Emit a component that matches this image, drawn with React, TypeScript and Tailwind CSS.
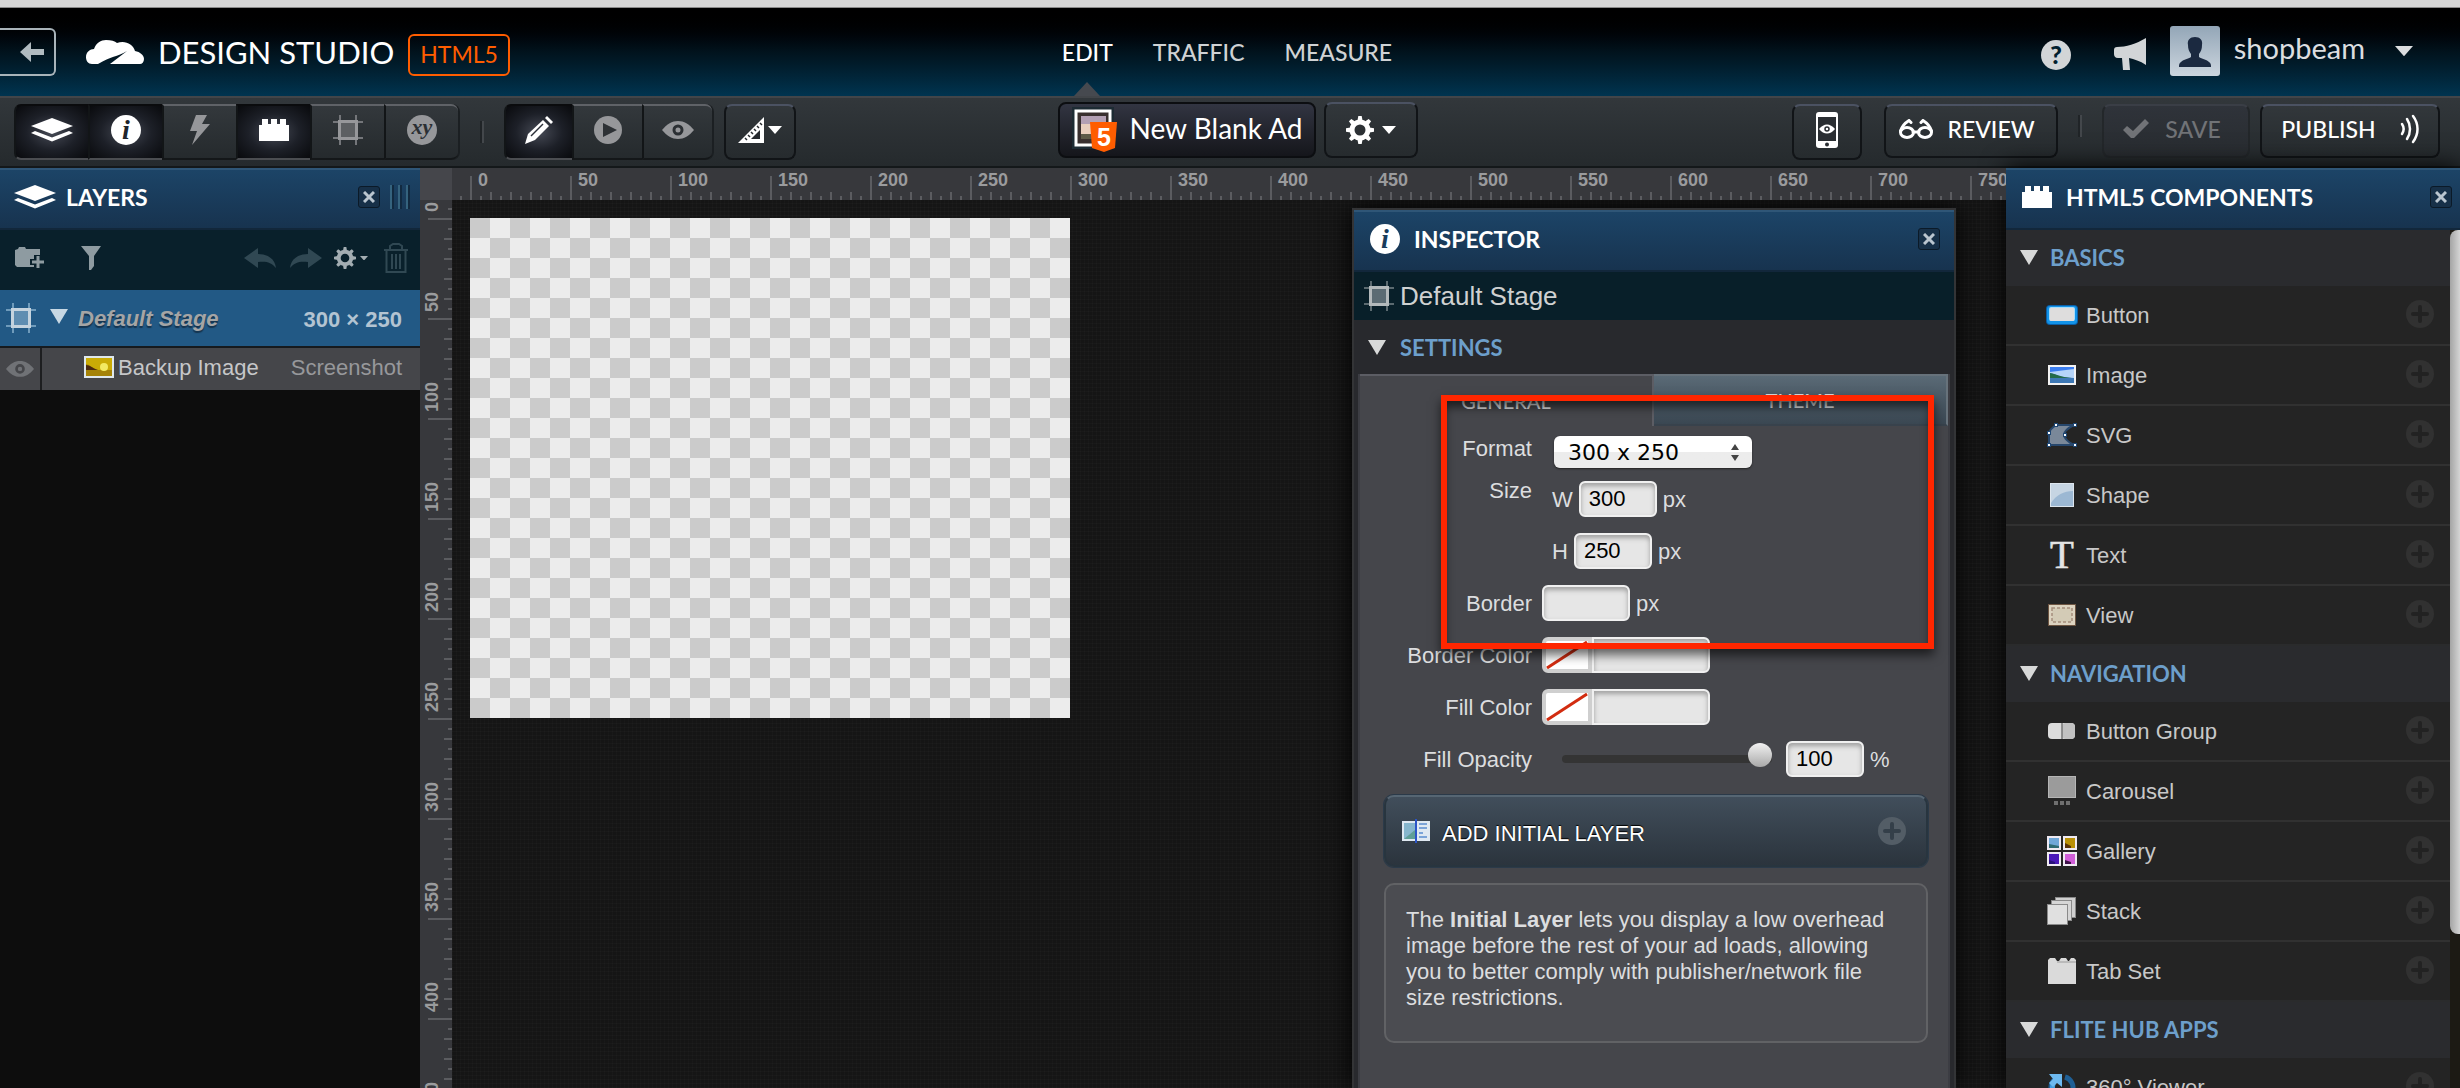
import React, { useEffect, useState } from 'react';
import type { ReactNode } from 'react';

/* ---------- icons ---------- */

function LayersIcon() {
  return (
    <svg width="42" height="24" viewBox="0 0 42 24" fill="#fff" aria-hidden="true">
      <path d="M0 8 21 0l21 8-21 8z" />
      <path d="M0 15l4-2 17 6.500 17-6.500 4 2-21 8.500z" />
    </svg>
  );
}

function InfoIcon({ ink }: { ink: string }) {
  return (
    <svg width="30" height="30" viewBox="0 0 30 30" aria-hidden="true">
      <circle cx="15" cy="15" r="15" fill="#fff" />
      <text x="15" y="24" textAnchor="middle" fontFamily="Liberation Serif, serif" fontStyle="italic" fontWeight="700" fontSize="28" fill={ink}>
        i
      </text>
    </svg>
  );
}

function BoltIcon() {
  return (
    <svg width="20" height="30" viewBox="0 0 20 30" fill="#96979a" aria-hidden="true">
      <path d="M6 0h11l-5 9h8L2 30l5-14H0z" />
    </svg>
  );
}

function BrickIcon() {
  return (
    <svg width="30" height="22" viewBox="0 0 30 22" fill="#fff" aria-hidden="true">
      <path d="M0 6h3V0h6v5h3V0h6v5h3V0h6v6h3v16H0z" />
    </svg>
  );
}

function StageIcon({ line, frame, fill }: { line: string; frame: string; fill: string }) {
  return (
    <svg width="30" height="30" viewBox="0 0 30 30" className="shrink-0" aria-hidden="true">
      <path d="M7 0v30M23 0v30M0 7h30M0 23h30" stroke={line} strokeWidth="2" />
      <rect x="6.500" y="6.500" width="17" height="17" fill={fill} stroke={frame} strokeWidth="3" />
    </svg>
  );
}

function XyIcon() {
  return (
    <svg width="30" height="30" viewBox="0 0 30 30" aria-hidden="true">
      <circle cx="15" cy="15" r="15" fill="#96979a" />
      <text x="15" y="19" textAnchor="middle" fontFamily="Liberation Serif, serif" fontStyle="italic" fontWeight="700" fontSize="22" fill="#2b2f33">
        xy
      </text>
    </svg>
  );
}

function PencilIcon() {
  return (
    <svg width="28" height="28" viewBox="0 0 28 28" aria-hidden="true">
      <path d="M0 28l3-10L18 4l6 6L10 24z" fill="#fff" />
      <path d="M20 2l2-2 6 6-2 2z" fill="#fff" />
      <path d="M6 20L18 8" stroke="#2b2f38" strokeWidth="1.500" />
    </svg>
  );
}

function PlayIcon() {
  return (
    <svg width="28" height="28" viewBox="0 0 28 28" aria-hidden="true">
      <circle cx="14" cy="14" r="14" fill="#96979a" />
      <path d="M9 7l14 7-14 7z" fill="#2d3135" />
    </svg>
  );
}

function EyeIcon({ color, hole, width }: { color: string; hole: string; width: number }) {
  return (
    <svg width={width} height={(width * 9) / 16} viewBox="0 0 32 18" aria-hidden="true">
      <path d="M0 9C5 3 10 0 16 0s11 3 16 9c-5 6-10 9-16 9S5 15 0 9z" fill={color} />
      <circle cx="16" cy="9" r="4" fill={color} stroke={hole} strokeWidth="3" />
    </svg>
  );
}

function RulerIcon() {
  return (
    <svg width="26" height="26" viewBox="0 0 26 26" aria-hidden="true">
      <path d="M0 26L26 0v26z" fill="#fff" />
      <path d="M13 22l9-9v9z" fill="#262a2e" />
      <path d="M7 21l2 2M10 18l2 2M13 15l2 2M16 12l2 2M19 9l2 2M22 6l2 2" stroke="#262a2e" strokeWidth="1.500" />
    </svg>
  );
}

function Caret({ width, color = '#fff' }: { width: number; color?: string }) {
  return (
    <svg width={width} height={(width * 8) / 14} viewBox="0 0 14 8" fill={color} aria-hidden="true">
      <path d="M0 0h14L7 8z" />
    </svg>
  );
}

function Triangle({ color = '#d8d9d9' }: { color?: string }) {
  return (
    <svg width="18" height="15" viewBox="0 0 18 15" fill={color} className="shrink-0" aria-hidden="true">
      <path d="M0 0h18L9 15z" />
    </svg>
  );
}

const teeth = [0, 45, 90, 135, 180, 225, 270, 315];

function GearIcon({ size, color }: { size: number; color: string }) {
  return (
    <svg width={size} height={size} viewBox="0 0 28 28" aria-hidden="true">
      <circle cx="14" cy="14" r="8" fill="none" stroke={color} strokeWidth="5" />
      {teeth.map((angle) => (
        <path key={angle} d="M11.500 4.500l.8-4.500h3.400l.8 4.500z" fill={color} transform={`rotate(${angle} 14 14)`} />
      ))}
    </svg>
  );
}

function CloudIcon() {
  return (
    <svg width="58" height="24" viewBox="0 0 58 24" fill="#fff" aria-hidden="true">
      <path d="M6 24C2 24 0 21 0 17c0-5 4-8 8-8C10 3 15 0 20 0c5 0 9 1 11 3 8-3 16 1 18 8 5 1 9 4 9 8 0 3-2 5-4 5H24l17-13C31 17 25 16 12 24z" />
    </svg>
  );
}

function BackArrow() {
  return (
    <svg width="24" height="20" viewBox="0 0 24 20" fill="#b1bbc0" aria-hidden="true">
      <path d="M0 10L11 0v7h13v6H11v7z" />
    </svg>
  );
}

function HelpIcon() {
  return (
    <svg width="30" height="30" viewBox="0 0 30 30" aria-hidden="true">
      <circle cx="15" cy="15" r="15" fill="#d2d5d7" />
      <text x="15" y="24" textAnchor="middle" fontFamily="Lato, sans-serif" fontWeight="900" fontSize="25" fill="#02202e">
        ?
      </text>
    </svg>
  );
}

function MegaphoneIcon() {
  return (
    <svg width="32" height="32" viewBox="0 0 32 32" fill="#d2d5d7" aria-hidden="true">
      <path d="M3 9C12 9 22 6 32 0v27C26 23 20 21 15 20l1 12H9L8 20H4c-3 0-4-2-4-4v-4c0-2 1-3 3-3z" />
    </svg>
  );
}

function Avatar() {
  return (
    <svg width="50" height="50" viewBox="0 0 50 50" aria-hidden="true">
      <defs>
        <linearGradient id="avatar" x2="0" y2="1">
          <stop stopColor="#93a6b7" />
          <stop offset="1" stopColor="#ccd5de" />
        </linearGradient>
      </defs>
      <rect width="50" height="50" rx="3" fill="url(#avatar)" />
      <path d="M25 11c5 0 8 3 7 8 0 4-1 6-3 9v3c3 2 7 2 10 5 2 1 2 3 2 5H9c0-2 0-4 2-5 3-3 7-3 10-5v-3c-2-3-3-5-3-9-1-5 2-8 7-8z" fill="#1b2940" />
    </svg>
  );
}

function AdIcon() {
  return (
    <svg width="46" height="46" viewBox="0 0 46 46" aria-hidden="true">
      <rect width="42" height="42" fill="#1d2b33" />
      <rect x="4" y="4" width="34" height="34" fill="#39302f" stroke="#fff" strokeWidth="3" />
      <rect x="9" y="9" width="25" height="8" fill="#b3a0b4" />
      <rect x="9" y="17" width="25" height="10" fill="#e9cfbe" />
      <path d="M9 27h25v5H9z" fill="#5d5a48" />
      <path d="M18 15h27l-2 26-11 4-12-4z" fill="#ff5d00" />
      <text x="32" y="39" textAnchor="middle" fontFamily="Liberation Sans, sans-serif" fontWeight="700" fontSize="25" fill="#fff">
        5
      </text>
    </svg>
  );
}

function PhoneIcon() {
  return (
    <svg width="22" height="36" viewBox="0 0 22 36" aria-hidden="true">
      <rect width="22" height="36" rx="3" fill="#fff" />
      <rect x="2" y="5" width="18" height="24" fill="#2a2e32" />
      <circle cx="11" cy="32.500" r="2" fill="#2a2e32" />
      <path d="M3 17c5-6 11-6 16 0-5 6-11 6-16 0z" fill="#fff" />
      <circle cx="11" cy="17" r="2" fill="#fff" stroke="#2a2e32" strokeWidth="1.500" />
    </svg>
  );
}

function GlassesIcon() {
  return (
    <svg width="34" height="20" viewBox="0 0 34 20" fill="none" stroke="#fff" strokeWidth="3" strokeLinecap="round" aria-hidden="true">
      <ellipse cx="8" cy="13.500" rx="6.500" ry="5" />
      <ellipse cx="26" cy="13.500" rx="6.500" ry="5" />
      <path d="M14 13h6M1.500 12C3 7 6 4 10 1.500l2 2M32.500 12C31 7 28 4 24 1.500l-2 2" />
    </svg>
  );
}

function CheckIcon() {
  return (
    <svg width="26" height="20" viewBox="0 0 26 20" fill="#717377" aria-hidden="true">
      <path d="M0 11l4-4 6 5L22 0l4 4-15 15H8z" />
    </svg>
  );
}

function WavesIcon() {
  return (
    <svg width="19" height="30" viewBox="0 0 19 30" fill="none" stroke="#fff" strokeWidth="2.500" strokeLinecap="round" aria-hidden="true">
      <path d="M2 10c2 3 2 7 0 10M7 5c4 6 4 14 0 20M13 2c6 8 6 18 0 26" />
    </svg>
  );
}

function FolderPlusIcon() {
  return (
    <svg width="30" height="22" viewBox="0 0 30 22" aria-hidden="true">
      <path d="M0 3l3-1 1-2h6l1 2h14v6h-6v4h-4v6h4v2H2l-2-2z" fill="#8e9ba1" />
      <path d="M23 9v12M17 15h12" stroke="#8e9ba1" strokeWidth="3" />
    </svg>
  );
}

function FunnelIcon() {
  return (
    <svg width="20" height="24" viewBox="0 0 20 24" fill="#8e9ba1" aria-hidden="true">
      <path d="M0 0h20l-7 10v10l-3 4H8V10z" />
    </svg>
  );
}

function UndoIcon({ flip = false }: { flip?: boolean }) {
  return (
    <svg width="32" height="20" viewBox="0 0 32 20" fill="#304853" aria-hidden="true">
      <path d={flip ? 'M32 10L18 0v6C8 6 1 11 0 20c5-6 10-7 18-6v6z' : 'M0 10L14 0v6c10 0 17 5 18 14-5-6-10-7-18-6v6z'} />
    </svg>
  );
}

function TrashIcon() {
  return (
    <svg width="24" height="30" viewBox="0 0 24 30" fill="none" stroke="#304853" strokeWidth="2" aria-hidden="true">
      <path d="M0 7h24M2.500 8v21h19V8M6 6V3l3-2h6l3 2v3M8 11v15M12 11v15M16 11v15" />
    </svg>
  );
}

function PlusBadge({ disc, cross }: { disc: string; cross: string }) {
  return (
    <svg width="28" height="28" viewBox="0 0 28 28" aria-hidden="true">
      <circle cx="14" cy="14" r="14" fill={disc} />
      <path d="M14 7v14M7 14h14" stroke={cross} strokeWidth="4" strokeLinecap="round" />
    </svg>
  );
}

function SunsetIcon() {
  return (
    <svg width="30" height="22" viewBox="0 0 30 22" aria-hidden="true">
      <rect x="1" y="1" width="28" height="20" fill="#c9ab06" stroke="#dfe8ec" strokeWidth="2" />
      <path d="M2 8c4 1 6 4 12 6h14v6H2z" fill="#a58308" />
      <path d="M2 9c4 0 6 3 12 5H2z" fill="#4a2a10" />
      <circle cx="20" cy="11" r="4" fill="#f3ea62" />
    </svg>
  );
}

function InitialLayerIcon() {
  return (
    <svg width="28" height="24" viewBox="0 0 28 24" aria-hidden="true">
      <rect y="2" width="28" height="20" fill="#dfe9f2" />
      <rect x="2" y="4" width="11" height="16" fill="#86b6cd" />
      <path d="M2 20l11-9v9z" fill="#5f9f97" />
      <path d="M17 5h8M17 9h8M17 14h4M17 18h8" stroke="#7ba4d8" strokeWidth="2" />
      <path d="M14 0v24" stroke="#2b55c8" strokeWidth="2" />
    </svg>
  );
}

const componentIcons: Record<string, ReactNode> = {
  Button: (
    <svg width="32" height="20" viewBox="0 0 32 20">
      <rect width="32" height="20" rx="4" fill="#0a5fa8" />
      <rect x="1" y="1" width="30" height="18" rx="3" fill="#1293e8" />
      <rect x="3" y="2" width="26" height="14" rx="2" fill="#a7dcfb" />
      <rect x="4" y="3" width="24" height="13" rx="1" fill="#dedddd" />
    </svg>
  ),
  Image: (
    <svg width="28" height="20" viewBox="0 0 28 20">
      <rect x="1" y="1" width="26" height="18" fill="#b5d4f8" stroke="#f2f2f2" strokeWidth="2" />
      <path d="M2 2h24v2L2 7z" fill="#3a7df0" />
      <path d="M2 8c6 1 10 5 24 5v5H2z" fill="#3d78b5" />
      <path d="M2 8c6 1 10 4 22 5H2z" fill="#236b4a" />
    </svg>
  ),
  SVG: (
    <svg width="32" height="26" viewBox="0 0 32 26">
      <path d="M10 3h18c-6 3-10 7-10 10s5 8 10 10H3V11c1-4 4-6 7-8z" fill="#7a8899" stroke="#27476c" strokeWidth="2" />
      <path d="M8 1h4v4H8zM27 1h4v4h-4zM1 9h4v4H1zM17 11h4v4h-4zM1 21h4v4H1zM27 21h4v4h-4z" fill="#1d4673" />
      <path d="M9 2h2v2H9zM28 2h2v2h-2zM2 10h2v2H2zM18 12h2v2h-2zM2 22h2v2H2zM28 22h2v2h-2z" fill="#fff" />
    </svg>
  ),
  Shape: (
    <svg width="24" height="24" viewBox="0 0 24 24">
      <rect x=".5" y=".5" width="23" height="23" fill="#c6d5e3" stroke="#dde6ee" />
      <path d="M1 20C6 12 14 8 23 8v15H1z" fill="#9cb8d3" />
    </svg>
  ),
  Text: (
    <svg width="28" height="28" viewBox="0 0 28 28">
      <text x="14" y="27" textAnchor="middle" fontFamily="Liberation Serif, serif" fontWeight="400" fontSize="39" fill="#e4e4e4" stroke="#e4e4e4" strokeWidth=".6">
        T
      </text>
    </svg>
  ),
  View: (
    <svg width="28" height="22" viewBox="0 0 28 22">
      <rect x=".5" y=".5" width="27" height="21" fill="#dcd3c0" stroke="#6d5542" />
      <rect x="4" y="4" width="20" height="14" fill="#d3cbb6" stroke="#a58f7c" strokeDasharray="3 2" strokeWidth="1.500" />
    </svg>
  ),
  'Button Group': (
    <svg width="28" height="18" viewBox="0 0 28 18">
      <rect y="1" width="27" height="16" rx="4" fill="#dcdcdc" />
      <rect x="14" y="1" width="13" height="16" rx="4" fill="#c2c2c2" />
      <path d="M14 1v16" stroke="#777" strokeWidth="1.500" />
    </svg>
  ),
  Carousel: (
    <svg width="28" height="30" viewBox="0 0 28 30">
      <rect x=".5" y=".5" width="27" height="21" fill="#9b9b9b" stroke="#b5b5b5" />
      <path d="M6 25h4v4H6zM12 25h4v4h-4zM18 25h4v4h-4z" fill="#6f6f6f" />
    </svg>
  ),
  Gallery: (
    <svg width="30" height="30" viewBox="0 0 30 30">
      <g stroke="#efeaf2" strokeWidth="2">
        <rect x="1" y="1" width="12" height="12" fill="#6fa7d8" />
        <rect x="17" y="1" width="12" height="12" fill="#b99007" />
        <rect x="1" y="17" width="12" height="12" fill="#4a18b8" />
        <rect x="17" y="17" width="12" height="12" fill="#d05fd8" />
      </g>
      <path d="M2 8l10 2v2H2z" fill="#2e6a72" />
      <path d="M18 7l6 3v2h-6z" fill="#5a3208" />
      <path d="M18 24l6 2v2h-6z" fill="#40104a" />
      <path d="M2 24l6 2v2H2z" fill="#28107a" />
    </svg>
  ),
  Stack: (
    <svg width="30" height="28" viewBox="0 0 30 28" stroke="#8a8a8a">
      <rect x="8.500" y=".5" width="20" height="20" fill="#d0d0d0" />
      <rect x="4.500" y="3.500" width="20" height="20" fill="#d6d6d6" />
      <rect x=".5" y="7.500" width="20" height="20" fill="#e0e0e0" />
    </svg>
  ),
  'Tab Set': (
    <svg width="28" height="28" viewBox="0 0 28 28">
      <path d="M0 3l2-2h5l2 3h2l2-3h5l2 3h1l2-3h3l2 2v24H0z" fill="#dadada" />
      <path d="M9 5h19" stroke="#9a9a9a" />
    </svg>
  ),
  '360° Viewer': (
    <svg width="28" height="28" viewBox="0 0 28 28" fill="none">
      <path d="M17 4a11 11 0 1 1-11 3" stroke="#1f5f95" strokeWidth="5" />
      <path d="M7 21A11 11 0 0 1 7 7" stroke="#3f9be0" strokeWidth="5" />
      <path d="M1 1h13v13l-5-4-4 4-4-4 4-4z" fill="#6db9f0" />
    </svg>
  ),
};

/* ---------- shared parts ---------- */

function CloseButton({ label }: { label: string }) {
  return (
    <button type="button" aria-label={label} className="flex size-[22px] shrink-0 items-center justify-center rounded-[3px] border border-[#0b1a28] bg-[#173048]">
      <svg width="12" height="12" viewBox="0 0 12 12" stroke="#bac5cf" strokeWidth="3" aria-hidden="true">
        <path d="M1 1l10 10M11 1L1 11" />
      </svg>
    </button>
  );
}

function PanelHeader({ icon, title, children, className }: { icon: ReactNode; title: string; children: ReactNode; className: string }) {
  return (
    <header className={`flex h-[62px] shrink-0 items-center border-t-2 border-b-2 border-t-[#2f5677] border-b-[#12273b] bg-linear-to-b from-[#1c4467] to-[#17334f] pb-1 ${className}`}>
      {icon}
      <h2 className="mr-auto font-['Lato',sans-serif] text-[23px] font-bold text-white">{title}</h2>
      {children}
    </header>
  );
}

function Divider() {
  return <span className="h-8 w-1 border-r-2 border-l-2 border-l-[#202427] border-r-[#43474b]" />;
}

function ToolButton({ label, active = false, className, children }: { label: string; active?: boolean; className: string; children: ReactNode }) {
  const look = active
    ? 'border-t-[#0a0b0d] border-b-[#4b4d51] bg-radial from-[#474b56] via-[#1d2028] to-[#090a0d]'
    : 'border-t-[#5f6267] border-b-[#141719] bg-linear-to-b from-[#33383c] to-[#252a2d]';
  return (
    <button type="button" aria-label={label} aria-pressed={active} className={`flex h-14 items-center justify-center border-t-2 border-b-2 border-l-2 border-l-[#121517] pb-1 first:rounded-l-[7px] last:rounded-r-[7px] ${look} ${className}`}>
      {children}
    </button>
  );
}

function BarButton({ label, className, children }: { label?: string; className: string; children: ReactNode }) {
  return (
    <button type="button" aria-label={label} className={`flex items-center justify-center rounded-lg border-2 border-[#111417] border-t-[#4b5262] bg-linear-to-b from-[#32373b] to-[#262b2e] font-['Lato',sans-serif] text-[23px] font-medium text-white ${className}`}>
      {children}
    </button>
  );
}

/* ---------- top bars ---------- */

function Header() {
  return (
    <header className="grid h-[88px] shrink-0 grid-cols-[1fr_auto_1fr] bg-linear-to-b from-black via-[#01131d] to-[#003450] font-['Lato',sans-serif]">
      <div className="flex items-start pt-5">
        <button type="button" aria-label="Back" className="flex h-12 w-14 items-center justify-end rounded-r-md border-2 border-l-0 border-[#a9b4ba] pr-2.5">
          <BackArrow />
        </button>
        <div className="flex h-12 items-center pl-[30px]">
          <CloudIcon />
          <h1 className="ml-3.5 text-[31px] leading-8 text-white">DESIGN STUDIO</h1>
        </div>
        <span className="mt-1.5 ml-3.5 flex h-[42px] items-center rounded-md border-2 border-[#ff5d00] px-2.5 pb-0.5 text-[23px] text-[#ff5d00]">HTML5</span>
      </div>
      <nav className="flex items-stretch gap-10 pr-1.5 text-[23px] font-medium">
        <a href="#edit" className="flex flex-col items-center justify-between pt-[30px] text-white">
          <span className="leading-7">EDIT</span>
          <svg width="26" height="14" viewBox="0 0 26 14" fill="#46494f" aria-hidden="true">
            <path d="M0 14L13 0l13 14z" />
          </svg>
        </a>
        <a href="#traffic" className="pt-[30px] leading-7 text-[#cfd2d4]">TRAFFIC</a>
        <a href="#measure" className="pt-[30px] leading-7 text-[#cfd2d4]">MEASURE</a>
      </nav>
      <div className="flex items-start justify-end pt-[18px] pr-[47px]">
        <button type="button" aria-label="Help" className="mt-3.5">
          <HelpIcon />
        </button>
        <button type="button" aria-label="Announcements" className="mt-3 ml-[43px]">
          <MegaphoneIcon />
        </button>
        <button type="button" className="ml-6 flex items-start">
          <Avatar />
          <span className="ml-3.5 pt-1.5 text-[29px] leading-8 text-[#dcdee0]">shopbeam</span>
          <span className="mt-5 ml-[30px]">
            <Caret width={18} color="#dcdee0" />
          </span>
        </button>
      </div>
    </header>
  );
}

function Toolbar() {
  return (
    <div className="grid h-[72px] shrink-0 grid-cols-[1fr_auto_1fr] items-start border-t-2 border-b-2 border-t-[#424549] border-b-[#14181a] bg-linear-to-b from-[#32373b] to-[#252a2d]">
      <div className="flex items-center px-3.5 pt-1.5">
        <div className="flex rounded-lg border-r-2 border-[#1b1f22]">
          <ToolButton label="Layers" active className="w-[74px]"><LayersIcon /></ToolButton>
          <ToolButton label="Inspector" active className="w-[74px]"><InfoIcon ink="#20242c" /></ToolButton>
          <ToolButton label="Events" className="w-[74px]"><BoltIcon /></ToolButton>
          <ToolButton label="Components" active className="w-[74px]"><BrickIcon /></ToolButton>
          <ToolButton label="Stage" className="w-[74px]"><StageIcon line="#74767a" frame="#96979a" fill="#5c5f62" /></ToolButton>
          <ToolButton label="Variables" className="w-[74px]"><XyIcon /></ToolButton>
        </div>
        <div className="mx-5"><Divider /></div>
        <div className="flex rounded-lg border-r-2 border-[#1b1f22]">
          <ToolButton label="Edit mode" active className="w-[68px]"><PencilIcon /></ToolButton>
          <ToolButton label="Play" className="w-[70px]"><PlayIcon /></ToolButton>
          <ToolButton label="Preview" className="w-[70px]"><EyeIcon color="#96979a" hole="#2b2f33" width={32} /></ToolButton>
        </div>
        <BarButton label="Guides" className="ml-2.5 h-14 w-[72px] gap-1 pb-1">
          <RulerIcon />
          <Caret width={14} />
        </BarButton>
      </div>
      <div className="flex gap-2 pt-1 pl-4">
        <button type="button" className="flex h-14 items-center rounded-lg border-2 border-[#0c0e11] bg-linear-to-b from-[#323542] to-[#15161b] pr-3 pl-3 font-['Lato',sans-serif] text-[28px] text-white">
          <AdIcon />
          <span className="ml-3 pb-1">New Blank Ad</span>
        </button>
        <BarButton label="Ad settings" className="h-14 w-[94px] gap-2">
          <GearIcon size={28} color="#fff" />
          <Caret width={14} />
        </BarButton>
      </div>
      <div className="flex items-start justify-end pt-1.5 pr-5">
        <BarButton label="Mobile preview" className="h-14 w-[70px] pb-1"><PhoneIcon /></BarButton>
        <BarButton className="ml-[22px] h-[54px] w-[174px] gap-3.5 pr-2 pb-1">
          <GlassesIcon />
          REVIEW
        </BarButton>
        <div className="mx-5 mt-2.5"><Divider /></div>
        <button type="button" disabled className="flex h-[54px] w-[148px] items-center justify-center gap-4 rounded-lg border-2 border-[#23272a] border-t-[#3a3e46] bg-linear-to-b from-[#2f333a] to-[#282c30] pr-2 pb-1 font-['Lato',sans-serif] text-[23px] font-medium text-[#717377]">
          <CheckIcon />
          SAVE
        </button>
        <BarButton className="ml-2.5 h-[54px] w-[180px] gap-6 pb-1">
          PUBLISH
          <WavesIcon />
        </BarButton>
      </div>
    </div>
  );
}

/* ---------- layers ---------- */

function LayersPanel() {
  return (
    <aside className="flex w-[420px] shrink-0 flex-col bg-[#0d0d0d]">
      <PanelHeader icon={<LayersIcon />} title="LAYERS" className="gap-2.5 pr-2.5 pl-3.5">
        <CloseButton label="Close layers" />
        <span className="h-6 w-5 bg-[repeating-linear-gradient(90deg,#35637e_0_2px,#122a40_2px_4px,transparent_4px_8px)]" />
      </PanelHeader>
      <div className="flex h-[60px] shrink-0 items-center bg-[#09202b] pr-3 pb-1 pl-[15px]">
        <button type="button" aria-label="New folder"><FolderPlusIcon /></button>
        <button type="button" aria-label="Filter" className="mr-auto ml-9"><FunnelIcon /></button>
        <button type="button" aria-label="Undo"><UndoIcon /></button>
        <button type="button" aria-label="Redo" className="ml-3.5"><UndoIcon flip /></button>
        <button type="button" aria-label="Layer options" className="ml-3 flex items-center gap-1">
          <GearIcon size={22} color="#a3adb2" />
          <Caret width={8} color="#a3adb2" />
        </button>
        <button type="button" aria-label="Delete" className="ml-4"><TrashIcon /></button>
      </div>
      <div className="flex h-[58px] shrink-0 items-center border-b-2 border-[#161a1e] bg-[#225985] pr-[18px] pl-1.5 font-['Liberation_Sans',sans-serif] text-[22px] font-bold">
        <StageIcon line="#6f9bbb" frame="#c5d3de" fill="#5f8db1" />
        <span className="ml-3.5 pb-1"><Triangle color="#c7d8e4" /></span>
        <span className="ml-2.5 text-[#a5a5a5] italic [text-shadow:0_2px_1px_#15344f]">Default Stage</span>
        <span className="ml-auto pt-0.5 text-[#b3c4d2]">300 × 250</span>
      </div>
      <div className="flex h-[42px] shrink-0 items-stretch bg-[#45464a] font-['Liberation_Sans',sans-serif] text-[22px]">
        <button type="button" aria-label="Toggle visibility" className="flex w-[42px] items-center justify-center border-r-2 border-[#1d1e20]">
          <EyeIcon color="#707276" hole="#45464a" width={28} />
        </button>
        <div className="flex flex-1 items-center pr-[18px] pb-1 pl-[42px]">
          <SunsetIcon />
          <span className="ml-1 text-[#c6c7c9]">Backup Image</span>
          <span className="ml-auto text-[#97989b]">Screenshot</span>
        </div>
      </div>
    </aside>
  );
}

/* ---------- canvas ---------- */

function useWindowSize() {
  const [size, setSize] = useState({ width: window.innerWidth, height: window.innerHeight });
  useEffect(() => {
    const update = () => setSize({ width: window.innerWidth, height: window.innerHeight });
    window.addEventListener('resize', update);
    return () => window.removeEventListener('resize', update);
  }, []);
  return size;
}

/* One label per 100 pixels of ruler, standing for 50 units. */
const marks = (length: number) => Array.from({ length: Math.max(1, Math.ceil(length / 100)) }, (_, i) => i * 50);

function Rulers({ children }: { children: ReactNode }) {
  const { width, height } = useWindowSize();
  return (
    <div className="grid min-w-0 flex-1 grid-cols-[32px_1fr] grid-rows-[32px_1fr]">
      <div className="bg-[#45464b]" />
      <div className="relative overflow-hidden bg-[#37383c] font-['Liberation_Sans',sans-serif] text-lg font-bold text-[#9a9b9d]">
        <svg className="absolute inset-0 size-full" aria-hidden="true">
          <defs>
            <pattern id="ticks-x" x="18" width="100" height="32" patternUnits="userSpaceOnUse">
              <path d="M1 8v24M21 24v8M41 24v8M61 24v8M81 24v8M11 28v4M31 28v4M51 28v4M71 28v4M91 28v4" stroke="#5b5c60" strokeWidth="2" />
            </pattern>
          </defs>
          <rect width="100%" height="100%" fill="url(#ticks-x)" />
        </svg>
        <div className="flex pl-[18px]">
          {marks(width - 924).map((mark) => (
            <span key={mark} className="w-[100px] shrink-0 pt-0.5 pl-2 leading-5">{mark}</span>
          ))}
        </div>
      </div>
      <div className="relative min-h-0 overflow-hidden bg-[#37383c] font-['Liberation_Sans',sans-serif] text-lg font-bold text-[#9a9b9d]">
        <svg className="absolute inset-0 size-full" aria-hidden="true">
          <defs>
            <pattern id="ticks-y" y="18" width="32" height="100" patternUnits="userSpaceOnUse">
              <path d="M8 1h24M24 21h8M24 41h8M24 61h8M24 81h8M28 11h4M28 31h4M28 51h4M28 71h4M28 91h4" stroke="#5b5c60" strokeWidth="2" />
            </pattern>
          </defs>
          <rect width="100%" height="100%" fill="url(#ticks-y)" />
        </svg>
        <div className="flex h-full flex-col">
          {marks(height - 118).map((mark) => (
            <span key={mark} className="flex h-[100px] shrink-0 rotate-180 items-start pt-1.5 pr-0.5 leading-5 [writing-mode:vertical-rl] first:h-[18px]">{mark}</span>
          ))}
        </div>
      </div>
      <div className="flex min-h-0 items-start overflow-hidden bg-[#151515] bg-[repeating-linear-gradient(90deg,#ffffff04_0_1px,transparent_1px_4px),repeating-linear-gradient(0deg,#ffffff04_0_1px,transparent_1px_4px)] pl-[18px]">
        {children}
      </div>
    </div>
  );
}

/* ---------- inspector ---------- */

const field = 'h-9 rounded-md border-2 border-[#f0f0f0] bg-[#e6e6e6] pl-2 text-black shadow-[inset_0_3px_5px_#a0a0a0]';

function Row({ label, id, indent = false, top = false, children }: { label?: string; id: string; indent?: boolean; top?: boolean; children: ReactNode }) {
  return (
    <div className="flex items-center gap-2.5">
      <label htmlFor={id} className={top ? 'w-[172px] shrink-0 self-start text-right leading-5' : 'w-[172px] shrink-0 text-right'}>{label}</label>
      <div className={indent ? 'flex items-center gap-1.5 pl-2.5' : 'flex items-center gap-1.5'}>{children}</div>
    </div>
  );
}

function ColorField({ id }: { id: string }) {
  return (
    <div className="flex">
      <button type="button" aria-label="Pick a color" className="h-9 w-[50px] rounded-l-md border-4 border-[#cfcfcf] bg-white">
        <svg width="42" height="28" viewBox="0 0 42 28" aria-hidden="true">
          <path d="M1 27L41 1" stroke="#d22c10" strokeWidth="3" />
        </svg>
      </button>
      <input id={id} type="text" className="h-9 w-[118px] rounded-r-md border-2 border-[#f0f0f0] bg-[#e6e6e6] px-2 text-black shadow-[inset_0_3px_5px_#a0a0a0]" />
    </div>
  );
}

function Inspector() {
  return (
    <section className="relative mt-2 mr-[50px] ml-auto flex w-[604px] shrink-0 flex-col self-stretch border-2 border-b-0 border-[#333436] bg-[#28292d] font-['Liberation_Sans',sans-serif] text-[22px] text-[#dcdddf] shadow-[0_0_24px_#000]">
      <PanelHeader icon={<InfoIcon ink="#1a3c5c" />} title="INSPECTOR" className="gap-3.5 pr-3.5 pl-4">
        <CloseButton label="Close inspector" />
      </PanelHeader>
      <div className="flex h-12 shrink-0 items-center gap-1.5 bg-[#081f29] pl-2.5 text-[26px] text-[#cfd1d1]">
        <StageIcon line="#5b6a70" frame="#b3b9bb" fill="#5b6b73" />
        Default Stage
      </div>
      <button type="button" className="flex h-[54px] shrink-0 items-center gap-3.5 pl-3.5 font-['Lato',sans-serif] font-bold text-[#6d9fcb]">
        <Triangle />
        SETTINGS
      </button>
      <div className="mx-1 flex-1 border-x-2 border-[#3c3d43] bg-[#45464b]">
        <div role="tablist" className="grid h-[52px] grid-cols-2 font-['Lato',sans-serif] text-[20px] font-medium">
          <button type="button" role="tab" aria-selected="true" className="border-t-2 border-r-2 border-[#5c5d64]">GENERAL</button>
          <button type="button" role="tab" aria-selected="false" className="border-t-2 border-r-2 border-b-2 border-t-[#67727b] border-r-[#67727b] border-b-[#38424c] bg-linear-to-b from-[#5a6a76] to-[#3a4752]">THEME</button>
        </div>
        <form className="flex flex-col gap-4 pt-1.5">
          <Row label="Format" id="format" indent>
            <div className="relative -mb-1.5 ml-0.5">
              <select id="format" className="block h-8 w-[198px] appearance-none rounded-md bg-linear-to-b from-white from-50% to-[#ececec] to-50% pl-3.5 font-['DejaVu_Sans',sans-serif] text-black shadow-[0_1px_2px_#222]">
                <option>300 x 250</option>
              </select>
              <svg width="10" height="17" viewBox="0 0 10 17" fill="#444" className="pointer-events-none absolute top-2 right-3" aria-hidden="true">
                <path d="M1 6l4-6 4 6zM1 11l4 6 4-6z" />
              </svg>
            </div>
          </Row>
          <Row label="Size" id="width" indent top>
            <span>W</span>
            <input id="width" type="text" defaultValue="300" aria-label="Width" className={`w-[78px] ${field}`} />
            <span>px</span>
          </Row>
          <Row id="height" indent>
            <span>H</span>
            <input id="height" type="text" defaultValue="250" aria-label="Height" className={`w-[78px] ${field}`} />
            <span>px</span>
          </Row>
          <Row label="Border" id="border">
            <input id="border" type="text" className={`w-[88px] ${field}`} />
            <span>px</span>
          </Row>
          <Row label="Border Color" id="border-color"><ColorField id="border-color" /></Row>
          <Row label="Fill Color" id="fill-color"><ColorField id="fill-color" /></Row>
          <Row label="Fill Opacity" id="opacity">
            <input
              id="opacity"
              type="range"
              defaultValue="100"
              className="mr-2 ml-5 h-6 w-[210px] appearance-none bg-transparent [&::-webkit-slider-runnable-track]:h-2 [&::-webkit-slider-runnable-track]:rounded-full [&::-webkit-slider-runnable-track]:bg-[#343434] [&::-webkit-slider-thumb]:-mt-3 [&::-webkit-slider-thumb]:size-6 [&::-webkit-slider-thumb]:appearance-none [&::-webkit-slider-thumb]:rounded-full [&::-webkit-slider-thumb]:bg-linear-to-b [&::-webkit-slider-thumb]:from-[#f2f2f2] [&::-webkit-slider-thumb]:to-[#a9a9a9]"
            />
            <input type="text" defaultValue="100" aria-label="Fill opacity percent" className={`w-[78px] ${field}`} />
            <span>%</span>
          </Row>
        </form>
        <div className="pt-[18px] pr-5 pl-6">
          <button type="button" className="flex h-[72px] w-full items-center rounded-[10px] border-2 border-[#28353f] border-t-[#566673] bg-linear-to-b from-[#414e5b] to-[#2b343d] pr-5 pl-4 text-white shadow-[0_0_0_1px_#2b3a49]">
            <InitialLayerIcon />
            <span className="mr-auto ml-3 pt-1 [text-shadow:0_-1px_1px_#000]">ADD INITIAL LAYER</span>
            <PlusBadge disc="#535d66" cross="#343f49" />
          </button>
          <p className="mt-4 h-40 rounded-[10px] border-2 border-[#616265] bg-[#4b4c51] px-5 pt-[22px] leading-[26px]">
            The <strong>Initial Layer</strong> lets you display a low overhead image before the rest of your ad loads, allowing you to better comply with publisher/network file size restrictions.
          </p>
        </div>
      </div>
      <div className="pointer-events-none absolute top-[185px] left-[87px] h-[254px] w-[493px] border-[6px] border-[#ff2600] shadow-[0_6px_10px_#0009,inset_0_8px_10px_-2px_#0009]" />
    </section>
  );
}

/* ---------- components ---------- */

const groups = [
  { title: 'BASICS', items: ['Button', 'Image', 'SVG', 'Shape', 'Text', 'View'] },
  { title: 'NAVIGATION', items: ['Button Group', 'Carousel', 'Gallery', 'Stack', 'Tab Set'] },
  { title: 'FLITE HUB APPS', items: ['360° Viewer'] },
];

function ComponentsPanel() {
  return (
    <aside className="flex w-[454px] shrink-0 flex-col bg-[#242424] shadow-[0_0_24px_#000]">
      <PanelHeader icon={<BrickIcon />} title="HTML5 COMPONENTS" className="gap-3.5 pr-2 pl-4">
        <CloseButton label="Close components" />
      </PanelHeader>
      <div className="flex min-h-0 flex-1 overflow-hidden">
        <div className="flex-1">
          {groups.map((group) => (
            <section key={group.title}>
              <button type="button" className="flex h-14 w-full items-center gap-3 bg-[#2a2b2e] pb-0.5 pl-3.5 font-['Lato',sans-serif] text-[22px] font-bold text-[#6d9fcb]">
                <Triangle />
                {group.title}
              </button>
              <ul className="font-['Liberation_Sans',sans-serif] text-[22px] text-[#c8c8c8]">
                {group.items.map((item) => (
                  <li key={item} className="flex h-[60px] items-center border-b-2 border-[#313131] pr-4 pl-10 last:border-[#2a2b2c]">
                    <span className="flex w-8 justify-center" aria-hidden="true">{componentIcons[item]}</span>
                    <span className="mr-auto pl-2">{item}</span>
                    <button type="button" aria-label={`Add ${item}`} className="pb-0.5">
                      <PlusBadge disc="#313131" cross="#222" />
                    </button>
                  </li>
                ))}
              </ul>
            </section>
          ))}
        </div>
        <div className="w-2.5 bg-[#1c1a14]">
          <div className="h-[82%] rounded-l-lg bg-linear-to-r from-[#a5a5a5] to-[#d5d5d5]" />
        </div>
      </div>
    </aside>
  );
}

export default function App() {
  return (
    <div className="flex h-screen flex-col overflow-hidden bg-[#151515]">
      <div className="h-2 shrink-0 border-b border-[#8a8a8a] bg-[#d6d6d6]" />
      <Header />
      <Toolbar />
      <main className="flex min-h-0 flex-1">
        <LayersPanel />
        <Rulers>
          <div className="mt-[18px] h-[500px] w-[600px] shrink-0 bg-[repeating-conic-gradient(#ececec_0_25%,#cbcbcb_0_50%)] bg-size-[40px_40px]" />
          <Inspector />
        </Rulers>
        <ComponentsPanel />
      </main>
    </div>
  );
}
